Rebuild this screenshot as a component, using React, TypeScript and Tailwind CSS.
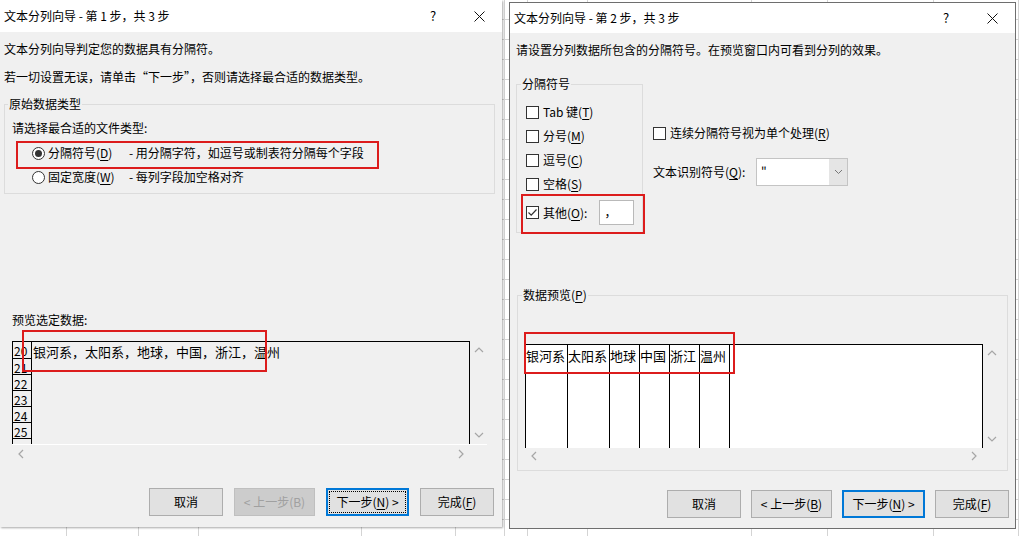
import type { ReactNode } from 'react';

// 背景里的 Excel 表格列宽（左右两张截图的滚动位置不同）
const LEFT_COLS = ['w-[67px]', 'w-[72px]', 'w-[60px]', 'w-[163px]', 'w-[94px]', 'w-[49px]'];
const RIGHT_COLS = ['w-[23px]', 'w-[60px]', 'w-[164px]', 'w-[76px]', 'w-[106px]', 'w-[85px]'];

const PREVIEW_COLS = [
  { text: '银河系', w: 'w-[42px]' },
  { text: '太阳系', w: 'w-[42px]' },
  { text: '地球', w: 'w-[30px]' },
  { text: '中国', w: 'w-[30px]' },
  { text: '浙江', w: 'w-[30px]' },
  { text: '温州', w: 'w-[30px]' },
];

function Sheet({ cols }: { cols: string[] }) {
  return (
    <div className="flex h-full bg-[image:repeating-linear-gradient(to_bottom,transparent_0px,transparent_19px,#d4d4d4_19px,#d4d4d4_20px)]">
      {cols.map((w, i) => (
        <div key={i} className={`${w} h-full shrink-0 border-r border-[#d4d4d4]`} />
      ))}
    </div>
  );
}

function TitleBar({ title, h }: { title: string; h: string }) {
  return (
    <div className={`flex ${h} shrink-0 items-center bg-white`}>
      <span className="flex-1 pl-[4px] text-[12px] leading-[16px]">{title}</span>
      <span className="w-[46px] text-center text-[13px] leading-[16px]">?</span>
      <span className="flex w-[46px] justify-center">
        <svg width="11" height="11" viewBox="0 0 11 11">
          <path d="M0.5 0.5 L10.5 10.5 M10.5 0.5 L0.5 10.5" stroke="#111" strokeWidth="1" />
        </svg>
      </span>
    </div>
  );
}

function Key({ children }: { children: ReactNode }) {
  return <span className="underline underline-offset-2">{children}</span>;
}

function Radio({ checked }: { checked?: boolean }) {
  return (
    <span className="flex h-[13px] w-[13px] shrink-0 items-center justify-center rounded-full border border-[#333] bg-white">
      {checked && <span className="h-[7px] w-[7px] rounded-full bg-[#333]" />}
    </span>
  );
}

function Check({ checked }: { checked?: boolean }) {
  return (
    <span className="flex h-[13px] w-[13px] shrink-0 items-center justify-center border border-[#333] bg-white">
      {checked && (
        <svg width="11" height="11" viewBox="0 0 11 11">
          <path d="M1.5 5.5 L4.2 8.2 L9.5 2.5" stroke="#333" strokeWidth="1.2" fill="none" />
        </svg>
      )}
    </span>
  );
}

function Chevron({ dir }: { dir: 'up' | 'down' | 'left' | 'right' }) {
  const d = {
    up: 'M1 6 L5 2 L9 6',
    down: 'M1 2 L5 6 L9 2',
    left: 'M6 1 L2 5 L6 9',
    right: 'M2 1 L6 5 L2 9',
  }[dir];
  const size = dir === 'up' || dir === 'down' ? { width: 10, height: 8 } : { width: 8, height: 10 };
  return (
    <svg {...size} viewBox={`0 0 ${size.width} ${size.height}`}>
      <path d={d} stroke="#a6a6a6" strokeWidth="1.2" fill="none" />
    </svg>
  );
}

function Btn({
  children,
  w,
  kind = 'normal',
}: {
  children: ReactNode;
  w: string;
  kind?: 'normal' | 'disabled' | 'focus' | 'default';
}) {
  if (kind === 'disabled') {
    return (
      <div className={`${w} flex h-[28px] items-center justify-center border border-[#bfbfbf] bg-[#cccccc] text-[12px] text-[#a0a0a0]`}>
        {children}
      </div>
    );
  }
  if (kind === 'focus' || kind === 'default') {
    return (
      <div className={`${w} flex h-[28px] border-2 border-[#0078d7] bg-[#e1e1e1] p-[1px]`}>
        <div
          className={`flex flex-1 items-center justify-center text-[12px] ${
            kind === 'focus' ? 'border border-dotted border-black' : ''
          }`}
        >
          {children}
        </div>
      </div>
    );
  }
  return (
    <div className={`${w} flex h-[28px] items-center justify-center border border-[#adadad] bg-[#e1e1e1] text-[12px]`}>
      {children}
    </div>
  );
}

function LeftDialog() {
  return (
    <div className="absolute left-0 top-0 flex h-[527px] w-[502px] flex-col bg-[#f0f0f0] shadow-[1px_1px_2px_rgba(0,0,0,0.35)]">
      <TitleBar title="文本分列向导 - 第 1 步，共 3 步" h="h-[32px]" />
      <p className="mt-[9px] px-[4px] text-[12px] leading-[16px]">文本分列向导判定您的数据具有分隔符。</p>
      <p className="mt-[12px] px-[4px] text-[12px] leading-[16px]">
        若一切设置无误，请单击“下一步”，否则请选择最合适的数据类型。
      </p>

      <fieldset className="mx-[4px] mt-[13px] w-[491px] border border-[#dcdcdc] px-[7px] pb-[8px] text-[12px]">
        <legend className="-ml-[4px] px-[1px] leading-[12px]">原始数据类型</legend>
        <p className="mt-[10px] leading-[16px]">请选择最合适的文件类型:</p>
        <div className="ml-[20px] mt-[9px] flex h-[16px] items-center">
          <Radio checked />
          <span className="ml-[3px] w-[81px]">
            分隔符号(<Key>D</Key>)
          </span>
          <span>- 用分隔字符，如逗号或制表符分隔每个字段</span>
        </div>
        <div className="ml-[20px] mt-[8px] flex h-[16px] items-center">
          <Radio />
          <span className="ml-[3px] w-[81px]">
            固定宽度(<Key>W</Key>)
          </span>
          <span>- 每列字段加空格对齐</span>
        </div>
      </fieldset>

      <p className="mt-[118px] px-[12px] text-[12px] leading-[16px]">预览选定数据:</p>

      <div className="ml-[12px] mt-[13px] w-[475px]">
        <div className="flex">
          <div className="flex h-[103px] w-[458px] overflow-hidden border-x border-t border-black">
            <div className="flex w-[19px] shrink-0 flex-col border-r border-black text-[12px] leading-[15px]">
              {['20', '21', '22', '23', '24', '25', ''].map((n, i) => (
                <div
                  key={i}
                  className={`${i === 0 ? 'h-[17px]' : 'h-[16px]'} shrink-0 border-b border-black pl-[1px] pt-[1px]`}
                >
                  {n}
                </div>
              ))}
            </div>
            <p className="pl-[1px] pt-[2px] text-[13px] leading-[16px]">银河系，太阳系，地球，中国，浙江，温州</p>
          </div>
          <div className="flex w-[17px] flex-col items-center justify-between pb-[5px] pt-[5px]">
            <Chevron dir="up" />
            <Chevron dir="down" />
          </div>
        </div>
        <div className="flex h-[18px] items-center justify-between border-t border-white pl-[5px] pr-[22px]">
          <Chevron dir="left" />
          <Chevron dir="right" />
        </div>
      </div>

      <div className="mb-[11px] mt-auto flex justify-end gap-[11px] pr-[8px]">
        <Btn w="w-[74px]">取消</Btn>
        <Btn w="w-[81px]" kind="disabled">
          &lt; 上一步(B)
        </Btn>
        <Btn w="w-[83px]" kind="focus">
          下一步(<Key>N</Key>) &gt;
        </Btn>
        <Btn w="w-[74px]">
          完成(<Key>F</Key>)
        </Btn>
      </div>

      {/* 标注红框 */}
      <div className="absolute left-[16px] top-[141px] h-[28px] w-[363px] border-2 border-[#dc1c1c]" />
      <div className="absolute left-[22px] top-[330px] h-[42px] w-[245px] border-2 border-[#dc1c1c]" />
    </div>
  );
}

function RightDialog() {
  const boxes = [
    { label: 'Tab 键', k: 'T' },
    { label: '分号', k: 'M' },
    { label: '逗号', k: 'C' },
    { label: '空格', k: 'S' },
  ];
  return (
    <div className="absolute left-[509px] top-[2px] flex h-[527px] w-[507px] flex-col border border-[#6e6e6e] bg-[#f0f0f0]">
      <TitleBar title="文本分列向导 - 第 2 步，共 3 步" h="h-[30px]" />
      <p className="mt-[9px] px-[6px] text-[12px] leading-[16px]">
        请设置分列数据所包含的分隔符号。在预览窗口内可看到分列的效果。
      </p>

      <div className="mt-[20px] flex items-start px-[6px] text-[12px]">
        <fieldset className="w-[127px] border border-[#dcdcdc] pb-[7px] pl-[9px]">
          <legend className="-ml-[5px] px-[1px] leading-[12px]">分隔符号</legend>
          <div className="mt-[10px]">
            {boxes.map((b) => (
              <div key={b.k} className="flex h-[24px] items-center gap-[4px]">
                <Check />
                <span>
                  {b.label}(<Key>{b.k}</Key>)
                </span>
              </div>
            ))}
            <div className="mt-[4px] flex h-[25px] items-center">
              <Check checked />
              <span className="ml-[4px]">
                其他(<Key>O</Key>):
              </span>
              <div className="ml-[12px] h-[25px] w-[35px] border border-[#b9b9b9] bg-white pl-[4px] leading-[22px]">，</div>
            </div>
          </div>
        </fieldset>

        <div className="ml-[10px] flex flex-col">
          <div className="mt-[47px] flex h-[16px] items-center gap-[4px]">
            <Check />
            <span>
              连续分隔符号视为单个处理(<Key>R</Key>)
            </span>
          </div>
          <div className="mt-[17px] flex h-[28px] items-center">
            <span className="w-[103px]">
              文本识别符号(<Key>Q</Key>):
            </span>
            <div className="flex h-[28px] w-[92px] border border-[#c4c4c4] bg-white">
              <span className="flex-1 pl-[4px] leading-[24px]">"</span>
              <span className="flex w-[18px] items-center justify-center bg-[#e5e5e5]">
                <svg width="9" height="6" viewBox="0 0 9 6">
                  <path d="M1 1 L4.5 4.5 L8 1" stroke="#777" strokeWidth="1" fill="none" />
                </svg>
              </span>
            </div>
          </div>
        </div>
      </div>

      <fieldset className="ml-[7px] mt-[56px] w-[491px] border border-[#dcdcdc] pb-[6px] pl-[7px] text-[12px]">
        <legend className="-ml-[3px] px-[1px] leading-[12px]">
          数据预览(<Key>P</Key>)
        </legend>
        <div className="mt-[43px] flex">
          <div className="flex h-[104px] w-[458px] border-x border-t border-black bg-white">
            {PREVIEW_COLS.map((c) => (
              <div key={c.text} className={`${c.w} h-full shrink-0 border-r border-black pt-[3px] text-[13px] leading-[16px]`}>
                {c.text}
              </div>
            ))}
          </div>
          <div className="flex w-[17px] flex-col items-center justify-between pb-[5px] pt-[5px]">
            <Chevron dir="up" />
            <Chevron dir="down" />
          </div>
        </div>
        <div className="flex h-[16px] w-[475px] items-center justify-between pl-[5px] pr-[22px]">
          <Chevron dir="left" />
          <Chevron dir="right" />
        </div>
      </fieldset>

      <div className="mb-[10px] mt-auto flex justify-end gap-[10px] pr-[6px]">
        <Btn w="w-[74px]">取消</Btn>
        <Btn w="w-[81px]">
          &lt; 上一步(<Key>B</Key>)
        </Btn>
        <Btn w="w-[83px]" kind="default">
          下一步(<Key>N</Key>) &gt;
        </Btn>
        <Btn w="w-[74px]">
          完成(<Key>F</Key>)
        </Btn>
      </div>

      {/* 标注红框 */}
      <div className="absolute left-[11px] top-[191px] h-[40px] w-[124px] border-2 border-[#dc1c1c]" />
      <div className="absolute left-[14px] top-[329px] h-[42px] w-[211px] border-2 border-[#dc1c1c]" />
    </div>
  );
}

export default function App() {
  return (
    <div className="relative h-[536px] w-[1019px] overflow-hidden bg-white font-[family-name:'Noto_Sans_CJK_SC','Microsoft_YaHei',sans-serif] text-black">
      <div className="flex h-full">
        <Sheet cols={LEFT_COLS} />
        <Sheet cols={RIGHT_COLS} />
      </div>
      <LeftDialog />
      <RightDialog />
    </div>
  );
}
